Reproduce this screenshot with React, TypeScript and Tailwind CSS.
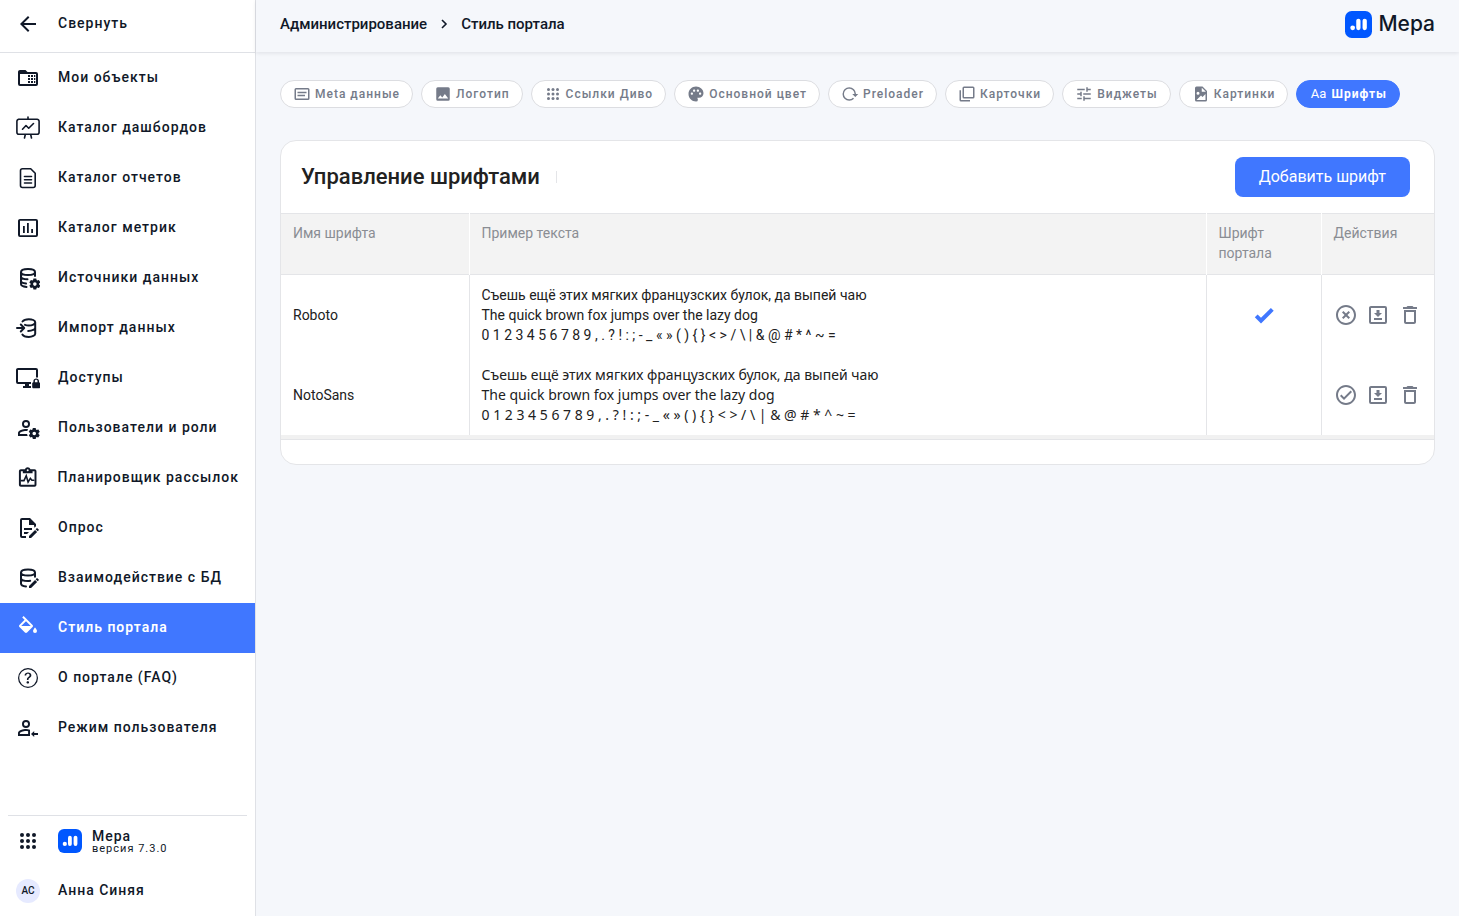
import React from 'react';
import {
  MdArrowBack,
  MdDeleteOutline,
  MdPalette,
  MdTune,
} from 'react-icons/md';
import { BsQuestionCircle } from 'react-icons/bs';

type IconProps = { className?: string };

function Svg({ className = 'h-6 w-6', children }: IconProps & { children: React.ReactNode }) {
  return (
    <svg viewBox="0 0 24 24" fill="currentColor" className={className} aria-hidden="true">
      {children}
    </svg>
  );
}

const outline = {
  fill: 'none',
  stroke: 'currentColor',
  strokeWidth: 1.6,
  strokeLinecap: 'round' as const,
  strokeLinejoin: 'round' as const,
};

// Small gear in the lower right corner of an icon
const cogPath =
  'M17 12c-.16 0-.24.08-.24.24l-.26 1.26c-.22.18-.54.34-.78.5l-1.28-.5c-.08 0-.24 0-.32.1l-1.28 2.16c-.08.08-.08.24.08.32L14 17v1l-1.08.88c-.08.08-.16.24-.08.32l1.28 2.16c.08.08.24.08.32.08l1.28-.48c.24.16.56.32.78.48l.26 1.28c0 .16.08.28.24.28h2.5c.1 0 .26-.12.26-.28L20 21.44c.2-.16.5-.32.76-.48l1.32.48c.08 0 .24 0 .32-.08l1.3-2.16c0-.08 0-.24-.1-.32L22.5 18v-1l1.1-.92c.1-.08.1-.24.1-.32l-1.3-2.16c-.08-.1-.24-.1-.32-.1l-1.32.5c-.26-.16-.56-.32-.76-.5l-.24-1.26c0-.16-.16-.24-.26-.24H17m1.25 3.7a1.8 1.8 0 1 1 0 3.6 1.8 1.8 0 0 1 0-3.6Z';

// Pencil in the lower right corner of an icon
const pencilPath =
  'M21.04 12.13c.14 0 .27.06.38.17l1.28 1.28c.22.21.22.56 0 .77l-1 1-2.05-2.05 1-1c.11-.11.25-.17.39-.17m-1.97 1.75 2.05 2.05L15.06 22H13v-2.06l6.07-6.06';

function FolderTableIcon() {
  return (
    <Svg>
      <path
        fillRule="evenodd"
        d="M4 4h5.500l2 2H20a2 2 0 0 1 2 2v10a2 2 0 0 1-2 2H4a2 2 0 0 1-2-2V6c0-1.100.9-2 2-2m0 4v10h16V8H4"
      />
      <path d="M12 9h2v2h-2V9m3 0h2v2h-2V9m3 0h1.300v2H18V9m-6 3h2v2h-2v-2m3 0h2v2h-2v-2m3 0h1.300v2H18v-2m-6 3h2v2h-2v-2m3 0h2v2h-2v-2m3 0h1.300v2H18v-2" />
    </Svg>
  );
}

function EaselIcon() {
  return (
    <Svg>
      <path {...outline} d="M3 3.300h18A2 2 0 0 1 23.100 5.300v11a2 2 0 0 1-2 2H2.900a2 2 0 0 1-2-2v-11a2 2 0 0 1 2-2M12 1v2M9.300 18.500 8.500 22M14.700 18.500l.8 3.500M6.500 13.200l3.500-3.700 2.700 2.700L17.500 7.500" />
    </Svg>
  );
}

function DocumentIcon() {
  return (
    <Svg>
      <path {...outline} d="M6.500 2.800h8.200l4.500 4.500v12.200a2 2 0 0 1-2 2H6.500a2 2 0 0 1-2-2V4.800a2 2 0 0 1 2-2M8.500 10.500h7M8.500 13.800h7M8.500 17h7" />
    </Svg>
  );
}

function ChartBoxIcon() {
  return (
    <Svg>
      <path
        fillRule="evenodd"
        d="M4 3h16a2 2 0 0 1 2 2v14a2 2 0 0 1-2 2H4a2 2 0 0 1-2-2V5c0-1.100.9-2 2-2m0 1.800v14.400h16V4.800H4M7 10h1.800v7H7v-7m4-3h1.800v10H11V7m4.200 6H17v4h-1.800v-4"
      />
    </Svg>
  );
}

function DatabaseCogIcon() {
  return (
    <Svg>
      <path {...outline} strokeWidth={2} d="M5 6c0-1.700 3-3 7-3s7 1.300 7 3-3 3-7 3-7-1.300-7-3v12c0 1.500 2.300 2.600 5.500 2.900M19 6v4M5 10.500c0 1.500 2.700 2.700 6.500 2.800M5 14.800c0 1.400 2.100 2.500 5 2.800" />
      <path fillRule="evenodd" transform="translate(.6 .6)" d={cogPath} />
    </Svg>
  );
}

function DatabaseImportIcon() {
  return (
    <Svg>
      <path {...outline} strokeWidth={2} d="M6.500 5.500C7.500 4.200 9.900 3.300 12.800 3.300c3.500 0 6.400 1.300 6.400 3s-2.900 3.200-6.400 3.200c-1.500 0-2.700-.2-3.800-.6M19.200 6.300v11.400c0 1.700-2.900 3.300-6.400 3.300-3.200 0-5.600-1-6.400-2.400M19.200 11.700c0 1.700-2.900 3.200-7 3.200M1 12h6.500M4.800 8.500 8.200 12l-3.400 3.500" />
    </Svg>
  );
}

function MonitorLockIcon() {
  return (
    <Svg>
      <path d="M2 2h18a2 2 0 0 1 2 2v7.500h-2V4H2v12h13v2h-2v2h2v2H7v-2h2v-2H2a2 2 0 0 1-2-2V4c0-1.100.9-2 2-2m21 14.300c.6 0 1.200.6 1.200 1.300v3.500c0 .6-.6 1.200-1.300 1.200h-5.500c-.6 0-1.200-.6-1.200-1.300v-3.500c0-.6.6-1.200 1.200-1.200V15c0-1.400 1.300-2.500 2.800-2.500S23 13.600 23 15v1.300m-1.500 0V15c0-.8-.6-1.200-1.300-1.200s-1.300.4-1.300 1.200v1.300h2.600" />
    </Svg>
  );
}

function UserCogIcon() {
  return (
    <Svg>
      <path
        fillRule="evenodd"
        d="M10 4a4 4 0 1 0 0 8 4 4 0 0 0 0-8m0 1.900a2.100 2.100 0 1 1 0 4.200 2.100 2.100 0 0 1 0-4.200M10 13c-2.670 0-8 1.330-8 4v3h9.670c-.28-.59-.48-1.230-.58-1.900H3.900V17c0-.64 3.130-2.100 6.100-2.100.43 0 .87.040 1.300.1.200-.64.470-1.240.82-1.790C11.340 13.080 10.600 13 10 13"
      />
      <path fillRule="evenodd" d={cogPath} />
    </Svg>
  );
}

function ClipboardPulseIcon() {
  return (
    <Svg>
      <path
        fillRule="evenodd"
        d="M19 3h-4.180C14.400 1.840 13.300 1 12 1s-2.400.84-2.820 2H5c-1.100 0-2 .9-2 2v14c0 1.100.9 2 2 2h14c1.100 0 2-.9 2-2V5c0-1.100-.9-2-2-2m-7 0a1 1 0 1 1 0 2 1 1 0 0 1 0-2M5 5h2v2h10V5h2v14H5V5"
      />
      <path {...outline} strokeLinejoin="miter" d="M5.500 14.700h2.700l2.300-5 1.900 6.500 2.300-3.900 1.600 2h2" />
    </Svg>
  );
}

function DocumentEditIcon() {
  return (
    <Svg>
      <path d="M10 20H6V4h7V2H6a2 2 0 0 0-2 2v16a2 2 0 0 0 2 2h4v-2" />
      <path d="M13 2h1l6 6v2.300l-1.600 1.500L18 9h-5V2" />
      <path d="M8 12h8v1.900H8V12m0 4h5l-1.900 1.900H8V16" />
      <path d={pencilPath} />
    </Svg>
  );
}

function DatabaseEditIcon() {
  return (
    <Svg>
      <path {...outline} strokeWidth={2} d="M5 6.500c0-1.700 3-3 7-3s7 1.300 7 3-3 3-7 3-7-1.300-7-3v11c0 1.400 2 2.600 5 2.900M19 6.500v4.300M5 12c0 1.700 3 3 7 3 .8 0 1.500-.1 2.200-.2" />
      <path d={pencilPath} />
    </Svg>
  );
}

function ColorFillIcon() {
  return (
    <Svg>
      <path d="M19 11.500s-2 2.170-2 3.500a2 2 0 0 0 4 0c0-1.330-2-3.500-2-3.500M5.210 10 10 5.210 14.790 10m1.770-1.060L7.620 0 6.210 1.410l2.380 2.380-5.150 5.150c-.59.560-.59 1.530 0 2.120l5.500 5.500c.29.290.68.440 1.060.44s.77-.15 1.060-.44l5.500-5.500c.59-.59.590-1.560 0-2.120Z" />
    </Svg>
  );
}

function HelpIcon() {
  return (
    <span className="flex h-6 w-6 items-center justify-center">
      <BsQuestionCircle className="h-5 w-5" />
    </span>
  );
}

function UserSwitchIcon() {
  return (
    <Svg>
      <path
        fillRule="evenodd"
        d="M10 4a4 4 0 1 0 0 8 4 4 0 0 0 0-8m0 1.900a2.100 2.100 0 1 1 0 4.200 2.100 2.100 0 0 1 0-4.200M10 13c-2.670 0-8 1.330-8 4v3h12v-6.300c-1.400-.5-2.900-.7-4-.7m0 1.900c.7 0 1.400.1 2.100.3v2.900H3.900V17c0-.64 3.130-2.100 6.100-2.100"
      />
      <path d="M15 18l3.200-3v2.100H22v1.900h-3.800V21L15 18" />
    </Svg>
  );
}

function DotsIcon({ className }: IconProps) {
  return (
    <Svg className={className}>
      {[6, 12, 18].map((y) =>
        [6, 12, 18].map((x) => <circle key={`${x}-${y}`} cx={x} cy={y} r="2" />)
      )}
    </Svg>
  );
}

function CardTextIcon({ className }: IconProps) {
  return (
    <Svg className={className}>
      <path d="M20 20H4a2 2 0 0 1-2-2V6a2 2 0 0 1 2-2h16a2 2 0 0 1 2 2v12a2 2 0 0 1-2 2M4 6v12h16V6H4m2 3h12v2H6V9m0 4h10v2H6v-2" />
    </Svg>
  );
}

function ImageIcon({ className }: IconProps) {
  return (
    <Svg className={className}>
      <path d="M8.500 13.500 11 16.500l3.500-4.500 4.500 6H5m16 1V5a2 2 0 0 0-2-2H5a2 2 0 0 0-2 2v14a2 2 0 0 0 2 2h14a2 2 0 0 0 2-2" />
    </Svg>
  );
}

function ReloadIcon({ className }: IconProps) {
  return (
    <Svg className={className}>
      <path d="M2 12a9 9 0 0 0 9 9c2.390 0 4.680-.94 6.400-2.600l-1.500-1.500A6.700 6.700 0 0 1 11 19c-6.240 0-9.360-7.540-4.950-11.950S18 5.770 18 12h-3l4 4h.1l3.900-4h-3A9 9 0 0 0 2 12" />
    </Svg>
  );
}

function CardsIcon({ className }: IconProps) {
  return (
    <Svg className={className}>
      <path d="M20 16V4H8v12h12m2 0a2 2 0 0 1-2 2H8a2 2 0 0 1-2-2V4a2 2 0 0 1 2-2h12a2 2 0 0 1 2 2v12m-6 4v2H4a2 2 0 0 1-2-2V7h2v13h12" />
    </Svg>
  );
}

function FileImageIcon({ className }: IconProps) {
  return (
    <Svg className={className}>
      <path
        fillRule="evenodd"
        d="M14 2H6a2 2 0 0 0-2 2v16a2 2 0 0 0 2 2h12a2 2 0 0 0 2-2V8l-6-6m4 18H6l6-6 2 2 4-4v8M13 3.500 18.500 9H13V3.500M8 9a2 2 0 1 1 0 4 2 2 0 0 1 0-4"
      />
    </Svg>
  );
}

function LettersIcon() {
  return <span className="w-[18px] text-center text-[13px] font-normal tracking-normal">Aa</span>;
}

function CloseCircleIcon() {
  return (
    <Svg>
      <path d="M12 20c-4.410 0-8-3.590-8-8s3.590-8 8-8 8 3.590 8 8-3.590 8-8 8m0-18C6.470 2 2 6.470 2 12s4.470 10 10 10 10-4.470 10-10S17.530 2 12 2m2.590 6L12 10.590 9.410 8 8 9.410 10.590 12 8 14.590 9.410 16 12 13.410 14.590 16 16 14.590 13.410 12 16 9.410 14.590 8Z" />
    </Svg>
  );
}

function CheckCircleIcon() {
  return (
    <Svg>
      <path d="M12 2C6.500 2 2 6.500 2 12s4.500 10 10 10 10-4.500 10-10S17.500 2 12 2m0 18c-4.410 0-8-3.590-8-8s3.590-8 8-8 8 3.590 8 8-3.590 8-8 8m4.590-12.420L10 14.170l-2.590-2.580L6 13l4 4 8-8-1.410-1.420Z" />
    </Svg>
  );
}

function DownloadBoxIcon() {
  return (
    <Svg>
      <path
        fillRule="evenodd"
        d="M5 3h14a2 2 0 0 1 2 2v14a2 2 0 0 1-2 2H5a2 2 0 0 1-2-2V5c0-1.100.9-2 2-2m0 2v14h14V5H5m3 12v-2h8v2H8m8-7-4 4-4-4h2.500V7h3v3H16Z"
      />
    </Svg>
  );
}

function CheckBoldIcon() {
  return (
    <Svg className="mx-auto h-6 w-6 text-[#4077ff]">
      <path d="m9 20.420-6.210-6.210 2.830-2.830L9 14.770l9.880-9.890 2.830 2.830L9 20.420Z" />
    </Svg>
  );
}

function MeraLogo({ className }: IconProps) {
  return (
    <Svg className={className}>
      <rect width="24" height="24" rx="6" fill="#0057ff" />
      <g fill="#fff">
        <circle cx="6.800" cy="14.900" r="2.100" />
        <rect x="10" y="6.800" width="3.800" height="10.200" rx="1.900" />
        <rect x="15.600" y="6.800" width="3.800" height="10.200" rx="1.900" />
      </g>
    </Svg>
  );
}

const navItems = [
  { label: 'Мои объекты', icon: FolderTableIcon },
  { label: 'Каталог дашбордов', icon: EaselIcon },
  { label: 'Каталог отчетов', icon: DocumentIcon },
  { label: 'Каталог метрик', icon: ChartBoxIcon },
  { label: 'Источники данных', icon: DatabaseCogIcon },
  { label: 'Импорт данных', icon: DatabaseImportIcon },
  { label: 'Доступы', icon: MonitorLockIcon },
  { label: 'Пользователи и роли', icon: UserCogIcon },
  { label: 'Планировщик рассылок', icon: ClipboardPulseIcon },
  { label: 'Опрос', icon: DocumentEditIcon },
  { label: 'Взаимодействие с БД', icon: DatabaseEditIcon },
  { label: 'Стиль портала', icon: ColorFillIcon, active: true },
  { label: 'О портале (FAQ)', icon: HelpIcon },
  { label: 'Режим пользователя', icon: UserSwitchIcon },
];

const tabs = [
  { label: 'Meta данные', icon: CardTextIcon },
  { label: 'Логотип', icon: ImageIcon },
  { label: 'Ссылки Диво', icon: DotsIcon },
  { label: 'Основной цвет', icon: MdPalette },
  { label: 'Preloader', icon: ReloadIcon },
  { label: 'Карточки', icon: CardsIcon },
  { label: 'Виджеты', icon: MdTune },
  { label: 'Картинки', icon: FileImageIcon },
  { label: 'Шрифты', icon: LettersIcon, active: true },
];

const fonts = [
  { name: 'Roboto', family: 'font-[Roboto,sans-serif]', isPortal: true },
  { name: 'NotoSans', family: "font-['Noto_Sans',sans-serif]", isPortal: false },
];

function Sidebar() {
  return (
    <aside className="flex w-64 shrink-0 flex-col border-r border-[#dfe1e6] bg-white text-sm font-medium tracking-[1px] text-[#101828]">
      <button type="button" className="flex h-[53px] items-center gap-[18px] border-b border-[#dfe1e6] px-4 pb-1 tracking-[1px]">
        <MdArrowBack className="h-6 w-6" />
        <span className="pb-0.5">Свернуть</span>
      </button>

      <nav className="flex flex-col">
        {navItems.map(({ label, icon: Icon, active }) => (
          <a
            key={label}
            href="#"
            className={`flex h-[50px] items-center gap-[18px] px-4 whitespace-nowrap ${active ? 'bg-[#4077ff] font-semibold text-white' : ''}`}
          >
            <Icon />
            <span className="pb-0.5">{label}</span>
          </a>
        ))}
      </nav>

      <div className="mt-auto">
        <div className="mx-2 flex h-[51px] items-center gap-[18px] border-t border-[#dfe1e6] px-2">
          <button type="button" aria-label="Приложения">
            <DotsIcon className="h-6 w-6" />
          </button>
          <div className="flex items-center gap-2.5">
            <MeraLogo className="h-6 w-6" />
            <div>
              <div className="leading-4">Мера</div>
              <div className="text-[11px] leading-[10px] font-normal">версия 7.3.0</div>
            </div>
          </div>
        </div>
        <a href="#" className="flex h-[50px] items-center gap-[18px] px-4">
          <span className="flex h-6 w-6 items-center justify-center rounded-full bg-[#e6eaff] text-[10px] tracking-normal">
            АС
          </span>
          <span className="pb-0.5">Анна Синяя</span>
        </a>
      </div>
    </aside>
  );
}

function FontTable() {
  return (
    <table className="w-full table-fixed border-b border-[#e4e5e8] text-sm leading-5 text-[#212121]">
      <thead>
        <tr className="border-y border-[#e4e5e8] bg-[#f3f3f3] text-left align-top text-[#8a8d93]">
          <th className="w-[188px] border-r border-white px-3 pt-[9px] pb-[11px] font-normal">Имя шрифта</th>
          <th className="border-r border-white px-3 pt-[9px] pb-[11px] font-normal">Пример текста</th>
          <th className="w-[115px] border-r border-white px-3 pt-[9px] pb-[11px] font-normal">Шрифт портала</th>
          <th className="w-[113px] px-3 pt-[9px] pb-[11px] font-normal">Действия</th>
        </tr>
      </thead>
      <tbody>
        {fonts.map((font) => (
          <tr key={font.name}>
            <td className="border-r border-[#e4e5e8] px-3">{font.name}</td>
            <td className={`border-r border-[#e4e5e8] px-3 py-[10px] ${font.family}`}>
              <p>Съешь ещё этих мягких французских булок, да выпей чаю</p>
              <p>The quick brown fox jumps over the lazy dog</p>
              <p>{'0 1 2 3 4 5 6 7 8 9 , . ? ! : ; - _ « » ( ) { } < > / \\ | & @ # * ^ ~ ='}</p>
            </td>
            <td className="border-r border-[#e4e5e8] px-3">{font.isPortal && <CheckBoldIcon />}</td>
            <td className="px-3">
              <div className="flex gap-2 text-[#757b89]">
                <button type="button" aria-label={font.isPortal ? 'Отключить' : 'Выбрать'}>
                  {font.isPortal ? <CloseCircleIcon /> : <CheckCircleIcon />}
                </button>
                <button type="button" aria-label="Скачать">
                  <DownloadBoxIcon />
                </button>
                <button type="button" aria-label="Удалить">
                  <MdDeleteOutline className="h-6 w-6" />
                </button>
              </div>
            </td>
          </tr>
        ))}
      </tbody>
      <tfoot>
        <tr className="bg-[#f1f1f1]">
          <td colSpan={4} className="h-1" />
        </tr>
      </tfoot>
    </table>
  );
}

export default function App() {
  return (
    <div className="flex min-h-screen bg-[#f5f7fb] font-[Roboto,sans-serif]">
      <Sidebar />

      <div className="flex min-w-0 flex-1 flex-col">
        <header className="flex h-[52px] items-center justify-between px-6 pb-1 text-[#101828] shadow-[0_1px_4px_rgba(16,24,40,0.1)]">
          <div className="flex items-center gap-3 text-[15px] font-medium">
            <a href="#">Администрирование</a>
            <svg viewBox="0 0 10 10" className="h-2.5 w-2.5" aria-hidden="true">
              <path d="M3 1l4 4-4 4" fill="none" stroke="currentColor" strokeWidth="1.600" />
            </svg>
            <span>Стиль портала</span>
          </div>
          <div className="flex items-center gap-1.5">
            <MeraLogo className="h-[27px] w-[27px]" />
            <span className="font-[Inter,sans-serif] text-[21px] leading-7 font-medium">Мера</span>
          </div>
        </header>

        <main className="px-6 py-7">
          <div className="flex flex-wrap gap-2">
            {tabs.map(({ label, icon: Icon, active }) => (
              <button
                key={label}
                type="button"
                className={`flex h-7 items-center gap-1 rounded-full border px-3 text-xs tracking-[1px] ${
                  active
                    ? 'border-[#4077ff] bg-[#4077ff] font-bold text-white'
                    : 'border-[#dcdde1] bg-white font-medium text-[#757b89]'
                }`}
              >
                <Icon className="h-[18px] w-[18px]" />
                {label}
              </button>
            ))}
          </div>

          {/* Fonts card */}
          <section className="mt-8 overflow-hidden rounded-2xl border border-[#e4e5e8] bg-white pb-6">
            <div className="flex h-[72px] items-center justify-between pr-6 pl-5">
              <div className="flex items-center gap-4">
                <h1 className="pb-0.5 text-[22px] font-medium text-[#212121]">Управление шрифтами</h1>
                <span className="h-3 w-px bg-[#e4e5e8]" />
              </div>
              <button type="button" className="h-10 rounded-lg bg-[#4077ff] px-6 text-base text-white">
                Добавить шрифт
              </button>
            </div>
            <FontTable />
          </section>
        </main>
      </div>
    </div>
  );
}
